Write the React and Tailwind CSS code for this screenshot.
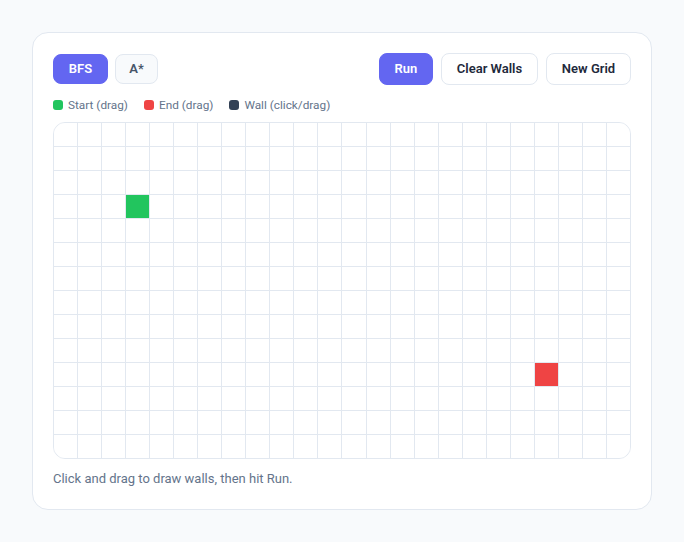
import React from "react";

const COLS = 24;
const ROWS = 14;
const START = [3, 3];
const END = [10, 20];

function Grid() {
  const cells = [];
  for (let r = 0; r < ROWS; r++) {
    for (let c = 0; c < COLS; c++) {
      let cls = "bg-white";
      if (r === START[0] && c === START[1]) cls = "bg-[#22c55e]";
      else if (r === END[0] && c === END[1]) cls = "bg-[#ef4444]";
      cells.push(<div key={r + "-" + c} className={"h-[23px] " + cls} />);
    }
  }
  return (
    <div className="mt-[9px] border border-[#e2e8f0] rounded-xl overflow-hidden">
      <div className="grid grid-cols-[repeat(24,minmax(0,1fr))] gap-px bg-[#e2e8f0]">
        {cells}
      </div>
    </div>
  );
}

function Legend({ color, label }) {
  return (
    <div className="flex items-center gap-[5px]">
      <span className={"w-2.5 h-2.5 rounded-[3px] " + color} />
      <span>{label}</span>
    </div>
  );
}

export default function App() {
  return (
    <div className="min-h-[542px] bg-[#f8fafc] p-8 font-['Roboto',sans-serif]">
      <div className="bg-white border border-[#e2e8f0] rounded-2xl p-5">
        <div className="h-8 flex items-center justify-between">
          <div className="flex items-center gap-[7px]">
            <button className="h-[30px] w-[55px] flex items-center justify-center rounded-lg border border-[#6366f1] bg-[#6366f1] text-white text-[13px] font-semibold">
              BFS
            </button>
            <button className="h-[30px] w-[43px] flex items-center justify-center rounded-lg border border-[#e2e8f0] bg-[#f8fafc] text-[#475569] text-[13px] font-semibold">
              A*
            </button>
          </div>
          <div className="flex items-center gap-2">
            <button className="h-8 w-[54px] flex items-center justify-center rounded-lg border border-[#6366f1] bg-[#6366f1] text-white text-[13px] font-semibold">
              Run
            </button>
            <button className="h-8 w-[97px] flex items-center justify-center rounded-lg border border-[#e2e8f0] bg-white text-[#1e293b] text-[13px] font-semibold">
              Clear Walls
            </button>
            <button className="h-8 w-[85px] flex items-center justify-center rounded-lg border border-[#e2e8f0] bg-white text-[#1e293b] text-[13px] font-semibold">
              New Grid
            </button>
          </div>
        </div>
        <div className="mt-3 h-4 flex items-center gap-4 text-[11.8px] leading-4 text-[#64748b]">
          <Legend color="bg-[#22c55e]" label="Start (drag)" />
          <Legend color="bg-[#ef4444]" label="End (drag)" />
          <Legend color="bg-[#334155]" label="Wall (click/drag)" />
        </div>
        <Grid />
        <p className="mt-[10px] text-[13px] leading-5 text-[#64748b]">
          Click and drag to draw walls, then hit Run.
        </p>
      </div>
    </div>
  );
}
